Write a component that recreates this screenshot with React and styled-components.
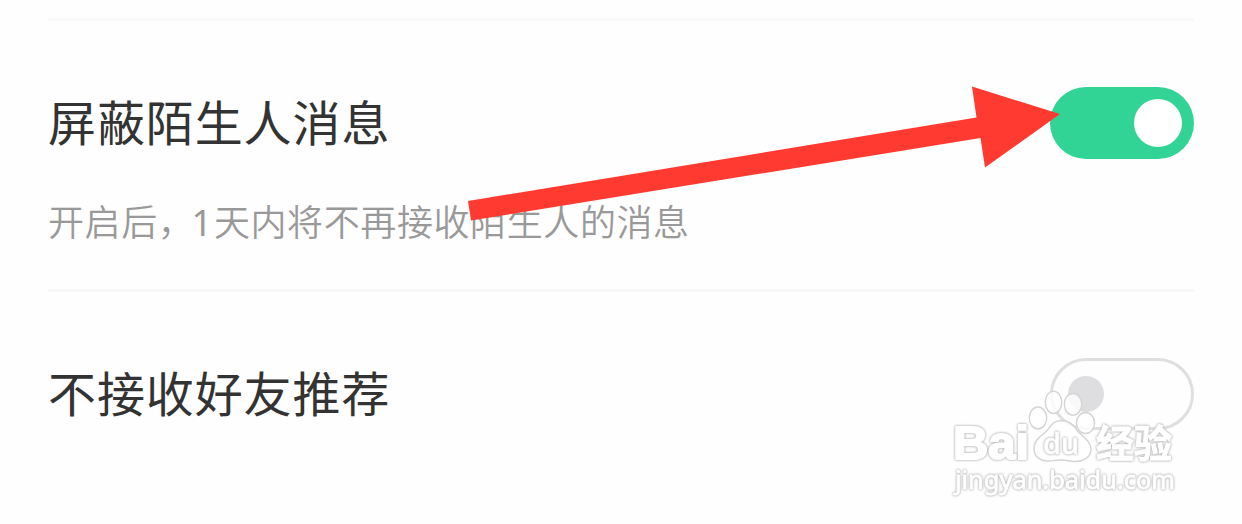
import React from "react";
import styled, { createGlobalStyle } from "styled-components";

const GlobalStyle = createGlobalStyle`
  body {
    margin: 0;
    background: #fefefe;
  }
`;

const PawMark = () => (
  <Watermark viewBox="0 0 250 130">
    <g fill="#fff" fillOpacity="0.8" stroke="#d4d4d4" strokeWidth="1.4">
      <ellipse cx="92" cy="32" rx="8.7" ry="11" />
      <ellipse cx="107.5" cy="16.3" rx="8.2" ry="11.2" />
      <ellipse cx="127" cy="18.3" rx="8.7" ry="10.8" />
      <ellipse cx="139.5" cy="37" rx="9" ry="10.5" />
      <path d="M115 34.500c-7 0-10 5-13 9c-4 5-14.500 9-14 20c.5 8 7 12 15 11.500c5-.5 8-1 12.500-1c5 0 8 1.500 13 1.500c10 0 16.500-5 16.500-12c0-9-9-13-14-19c-3-5-7-10-16-10z" />
    </g>
    <BrandText x="7" y="73" textLength="76" lengthAdjust="spacingAndGlyphs">Bai</BrandText>
    <DuText x="97" y="67.5" textLength="36" lengthAdjust="spacingAndGlyphs">du</DuText>
    <CjkText x="150" y="71" textLength="76" lengthAdjust="spacingAndGlyphs">经验</CjkText>
    <UrlText x="9" y="103" textLength="220" lengthAdjust="spacingAndGlyphs">jingyan.baidu.com</UrlText>
  </Watermark>
);

const App = () => {
  return (
    <Page>
      <GlobalStyle />
      <SettingItem $height={268}>
        <SettingRow>
          <Title>屏蔽陌生人消息</Title>
          <Switch $on role="switch" aria-checked="true">
            <Knob $on />
          </Switch>
        </SettingRow>
        <Description>开启后，<Digit>1</Digit>天内将不再接收陌生人的消息</Description>
      </SettingItem>
      <SettingItem $height={232}>
        <SettingRow>
          <Title>不接收好友推荐</Title>
          <Switch role="switch" aria-checked="false">
            <Knob />
          </Switch>
        </SettingRow>
      </SettingItem>

      <Arrow viewBox="0 0 594 138">
        <path d="M2 116L510.500 32.500L506 1.500L594 29L519 82.500L514.500 53L5 135.500Z" fill="#ff3a30" />
      </Arrow>
      <PawMark />
    </Page>
  );
};

export default App;

const Page = styled.div`
  position: relative;
  box-sizing: border-box;
  height: 524px;
  padding: 18px 48px 0;
  overflow: hidden;
  background: #fefefe;
  font-family: "Noto Sans CJK SC", sans-serif;
`;

const SettingItem = styled.div`
  box-sizing: content-box;
  height: ${({ $height }) => $height}px;
  border-top: 3px solid #f8f8f8;
`;

const SettingRow = styled.div`
  display: flex;
  justify-content: space-between;
  align-items: center;
  height: 72px;
  padding-top: 66px;
`;

const Title = styled.div`
  margin-top: -6px;
  color: #333;
  font-size: 48px;
  line-height: 72px;
  letter-spacing: 0.9px;
`;

const Description = styled.div`
  margin-top: 34px;
  color: #999;
  font-size: 36px;
  font-weight: 350;
  line-height: 54px;
  letter-spacing: 0.6px;
`;

const Digit = styled.span`
  display: inline-block;
  width: 19.5px;
  font-family: "Noto Sans", sans-serif;
  font-weight: 400;
  line-height: 1;
  text-indent: -3px;
`;

const Switch = styled.div`
  box-sizing: border-box;
  display: flex;
  align-items: center;
  justify-content: ${({ $on }) => ($on ? "flex-end" : "flex-start")};
  width: 144px;
  height: 72px;
  padding: ${({ $on }) => ($on ? "0 12px" : "0 15px")};
  border: ${({ $on }) => ($on ? "none" : "3px solid #dfdfe0")};
  border-radius: 36px;
  background: ${({ $on }) => ($on ? "#32d496" : "#fefefe")};
`;

const Knob = styled.div`
  width: ${({ $on }) => ($on ? 48 : 36)}px;
  height: ${({ $on }) => ($on ? 48 : 36)}px;
  border-radius: 50%;
  background: ${({ $on }) => ($on ? "#fff" : "#dedee0")};
`;

const Arrow = styled.svg`
  position: absolute;
  left: 466px;
  top: 85px;
  width: 594px;
  height: 138px;
`;

const Watermark = styled.svg`
  position: absolute;
  left: 946px;
  top: 386px;
  width: 250px;
  height: 130px;
`;

// white letters, the grey rim comes from the shadow around them
const MarkText = styled.text`
  fill: #fff;
  stroke: #fff;
  stroke-linejoin: round;
  filter: drop-shadow(0 0 0.8px #aaa) drop-shadow(0 0 0.8px #ddd);
`;

const BrandText = styled(MarkText)`
  font: 700 47px "Liberation Sans", sans-serif;
  stroke-width: 2px;
`;

const DuText = styled(MarkText)`
  font: 500 28px "Noto Sans", sans-serif;
  stroke-width: 0.5px;
`;

const CjkText = styled(MarkText)`
  font: 700 38px "Noto Sans CJK SC", sans-serif;
  stroke-width: 1px;
`;

const UrlText = styled(MarkText)`
  font: 400 26px "Noto Sans", sans-serif;
  stroke-width: 0.8px;
`;
